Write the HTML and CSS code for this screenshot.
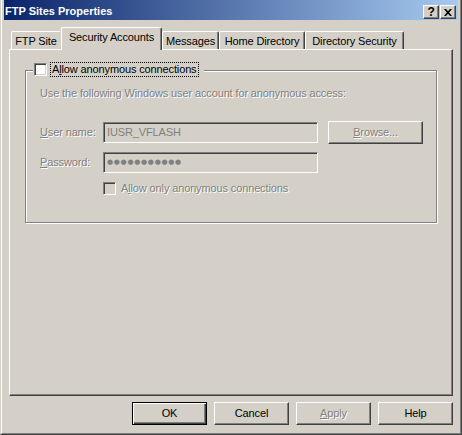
FILE: index.html
```html
<!DOCTYPE html>
<html>
<head>
<meta charset="utf-8">
<title>FTP Sites Properties</title>
<link rel="stylesheet" href="styles.css">
</head>
<body>
<div class="window">
  <div class="frame">
    <div class="titlebar">
      <span class="title">FTP Sites Properties</span>
      <div class="caption-btns">
        <div class="cbtn cbtn-help">?</div>
        <div class="cbtn">
          <svg width="8" height="7" viewBox="0 0 8 7"><path d="M0 0h2l2 2.2L6 0h2L5.1 3.5 8 7H6L4 4.8 2 7H0l2.9-3.5z" fill="#000"/></svg>
        </div>
      </div>
    </div>
    <div class="content">
      <div class="tabs">
        <div class="tab tab-ftp tab-hidden-right">FTP Site</div>
        <div class="tab tab-sec selected">Security Accounts</div>
        <div class="tab tab-msg">Messages</div>
        <div class="tab tab-home">Home Directory</div>
        <div class="tab tab-dirsec">Directory Security</div>
      </div>
      <div class="panel">
        <div class="group">
          <div class="legend">
            <span class="check check-on"></span>
            <span class="focus">A<u>l</u>low anonymous connections</span>
          </div>
          <p class="hint disabled">Use the following Windows user account for anonymous access:</p>
          <div class="row row-user">
            <span class="label disabled"><u>U</u>ser name:</span>
            <div class="textbox">IUSR_VFLASH</div>
            <div class="btn btn-browse disabled"><u>B</u>rowse...</div>
          </div>
          <div class="row row-pass">
            <span class="label disabled"><u>P</u>assword:</span>
            <div class="textbox"><span class="dots">●●●●●●●●●●●</span></div>
          </div>
          <div class="row row-only">
            <span class="check check-off"></span>
            <span class="disabled">A<u>l</u>low only anonymous connections</span>
          </div>
        </div>
      </div>
      <div class="buttons">
        <div class="btn btn-default">OK</div>
        <div class="btn">Cancel</div>
        <div class="btn disabled"><u>A</u>pply</div>
        <div class="btn">Help</div>
      </div>
    </div>
  </div>
</div>
</body>
</html>
```
FILE: styles.css
```css
* { box-sizing: border-box; }
html, body { margin: 0; padding: 0; }
body {
  width: 462px;
  height: 435px;
  overflow: hidden;
  background: #D4D0C8;
  font-family: "Liberation Sans", Arial, sans-serif;
  font-size: 11px;
  letter-spacing: -0.13px;
  color: #000;
}
.window {
  width: 462px;
  height: 435px;
  background: #D4D0C8;
  border-left: 1px solid #D4D0C8;
  border-right: 1px solid #404040;
  border-bottom: 1px solid #404040;
}
.frame {
  height: 100%;
  display: flex;
  flex-direction: column;
  border-left: 1px solid #fff;
  border-right: 1px solid #808080;
  border-bottom: 1px solid #808080;
  padding: 0 2px 2px;
}
.titlebar {
  flex: none;
  height: 20px;
  display: flex;
  align-items: flex-start;
  padding: 0 2px 0 1px;
  background: linear-gradient(to right, #0A246A, #A6CAF0);
}
.title {
  margin-top: 2px;
  line-height: 18px;
  color: #fff;
  font-weight: bold;
  letter-spacing: 0;
}
.caption-btns {
  margin-left: auto;
  margin-top: 5px;
  display: flex;
  gap: 1px;
}
.cbtn {
  width: 16px;
  height: 14px;
  display: flex;
  align-items: center;
  justify-content: center;
  background: #D4D0C8;
  border: 1px solid;
  border-color: #fff #404040 #404040 #fff;
  box-shadow: inset -1px -1px 0 #808080;
}
.cbtn-help {
  font-weight: bold;
  font-size: 12px;
  line-height: 12px;
}
.content {
  flex: 1;
  display: flex;
  flex-direction: column;
  padding: 7px 5px 6px;
}
.tabs {
  flex: none;
  height: 22px;
  display: flex;
  align-items: flex-end;
  padding-left: 2px;
}
.tab {
  height: 18px;
  padding-top: 3px;
  line-height: 13px;
  text-align: center;
  white-space: nowrap;
  background: #D4D0C8;
  border-top: 1px solid #fff;
  border-left: 1px solid #fff;
  border-right: 1px solid #404040;
  border-radius: 2px 2px 0 0;
  box-shadow: inset -1px 0 0 #808080;
}
.tab-hidden-right { border-right-color: #D4D0C8; box-shadow: none; }
.tab.selected {
  position: relative;
  z-index: 1;
  height: 23px;
  margin-bottom: -1px;
}
.tab-ftp { width: 50px; }
.tab-sec { width: 101px; }
.tab-msg { width: 57px; }
.tab-home { width: 86px; }
.tab-dirsec { width: 99px; }
.panel {
  flex: none;
  height: 347px;
  padding: 20px 15px 0;
  border: 1px solid;
  border-color: #fff #404040 #404040 #fff;
  box-shadow: inset -1px -1px 0 #808080;
}
.group {
  position: relative;
  height: 153px;
  padding: 16px 0 0 14px;
  border: 1px solid #808080;
  box-shadow: 1px 1px 0 #fff, inset 1px 1px 0 #fff;
}
.legend {
  position: absolute;
  top: -9px;
  left: 7px;
  height: 15px;
  display: flex;
  align-items: center;
  gap: 3px;
  padding: 0 5px 0 1px;
  background: #D4D0C8;
}
.check {
  flex: none;
  width: 13px;
  height: 13px;
  border: 1px solid;
  border-color: #808080 #fff #fff #808080;
  box-shadow: inset 1px 1px 0 #404040, inset -1px -1px 0 #D4D0C8;
}
.check-on { background: #fff; }
.check-off { background: #D4D0C8; }
.focus {
  border: 1px dotted #000;
  padding: 0 1px;
  line-height: 13px;
}
.disabled {
  color: #808080;
  text-shadow: 1px 1px 0 #fff;
}
.hint {
  margin: 0;
  line-height: 13px;
}
.row {
  display: flex;
  align-items: center;
}
.row-user { margin-top: 21px; height: 23px; }
.row-pass { margin-top: 8px; height: 21px; }
.row-only { margin-top: 9px; height: 13px; padding-left: 63px; gap: 5px; line-height: 13px; }
.label {
  width: 63px;
  line-height: 13px;
}
.textbox {
  width: 215px;
  height: 21px;
  padding: 0 3px;
  line-height: 19px;
  color: #808080;
  background: #D4D0C8;
  border: 1px solid;
  border-color: #808080 #fff #fff #808080;
  box-shadow: inset 1px 1px 0 #404040, inset -1px -1px 0 #D4D0C8;
}
.dots {
  font-family: "DejaVu Sans", sans-serif;
  font-size: 7px;
  letter-spacing: 0.7px;
  vertical-align: top;
}
.btn {
  width: 75px;
  height: 23px;
  line-height: 20px;
  text-align: center;
  background: #D4D0C8;
  border: 1px solid;
  border-color: #fff #404040 #404040 #fff;
  box-shadow: inset -1px -1px 0 #808080;
}
.btn-browse {
  width: 95px;
  margin-left: 10px;
}
.btn-default {
  border-color: #000;
  box-shadow: inset 1px 1px 0 #fff, inset -1px -1px 0 #404040, inset -2px -2px 0 #808080;
}
.buttons {
  flex: none;
  display: flex;
  justify-content: flex-end;
  gap: 7px;
  margin-top: 6px;
}
```
